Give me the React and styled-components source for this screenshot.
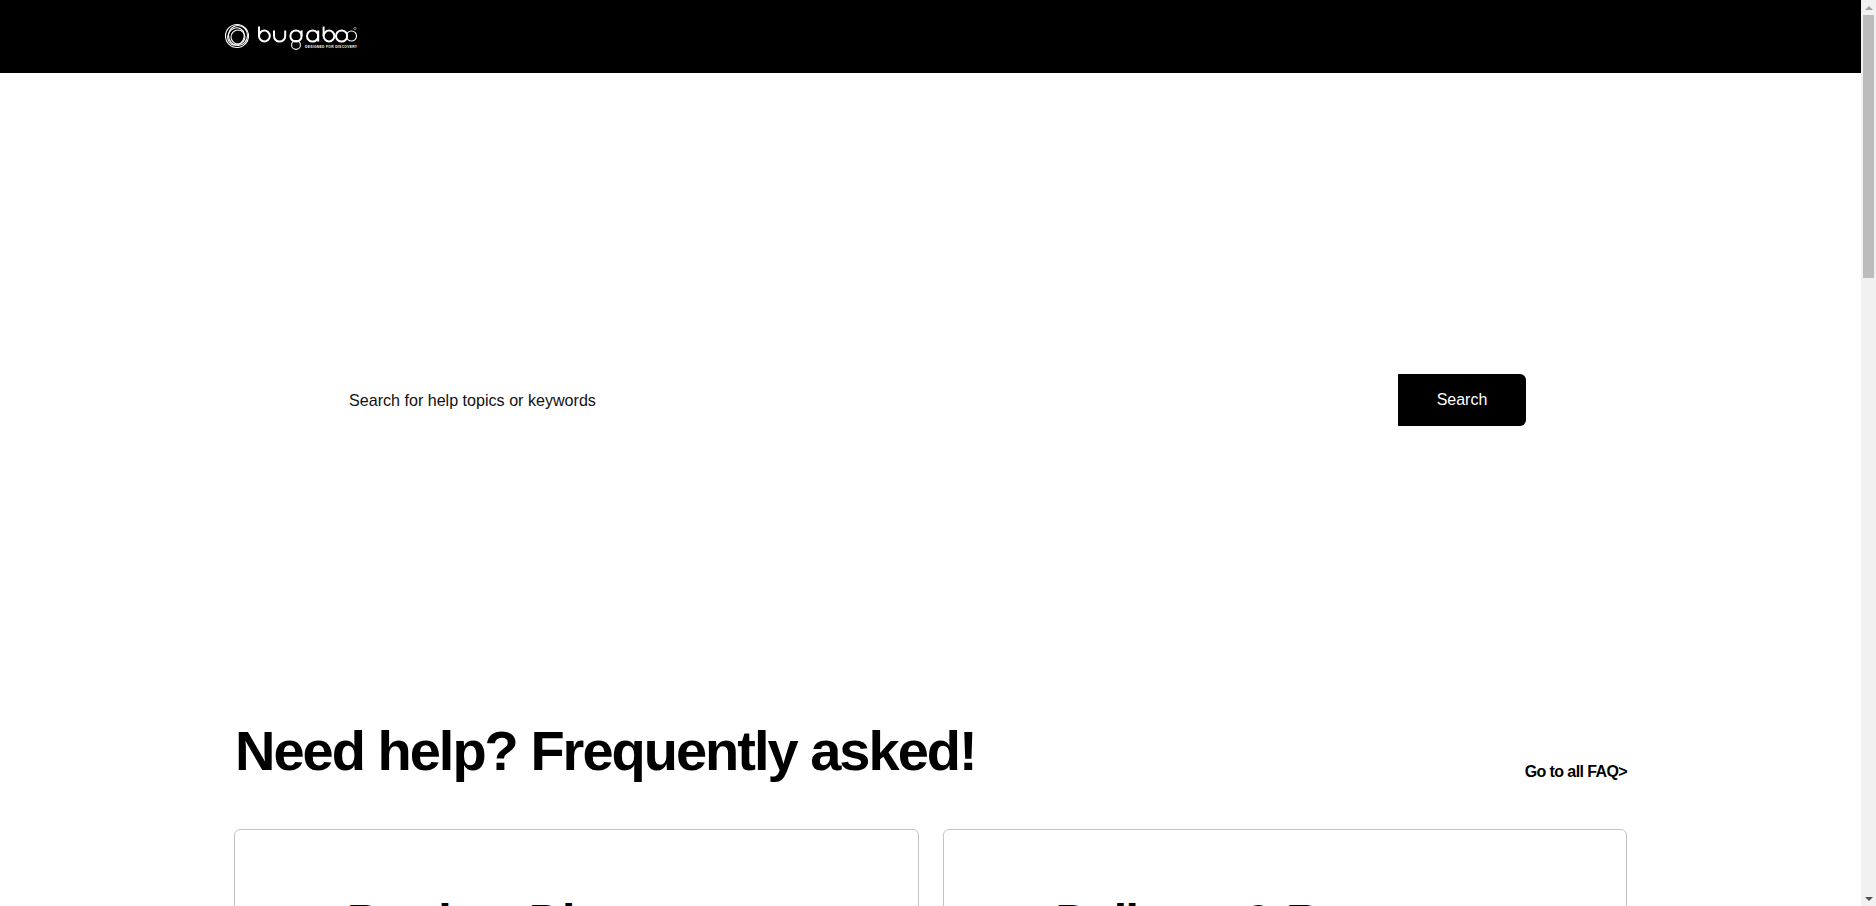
import React from 'react'
import styled, { createGlobalStyle } from 'styled-components'

const GlobalStyle = createGlobalStyle`
  html, body {
    height: 100%;
    overflow: hidden;
  }
  body {
    margin: 0;
    background: #fff;
    color: #000;
    font-family: "Liberation Sans", Arial, sans-serif;
  }
`

const Shell = styled.div`
  height: 100vh;
  display: flex;
`

const Page = styled.main`
  flex: 1;
  min-width: 0;
  overflow: hidden;
`

/* classic browser scrollbar down the right edge */
const ScrollRail = styled.div`
  width: 15px;
  flex: none;
  background: #f1f1f1;
  display: flex;
  flex-direction: column;
  align-items: center;
`

const ArrowBox = styled.div`
  height: 15px;
  flex: none;
  display: flex;
  align-items: center;
  justify-content: center;
`

const Arrow = styled.span`
  width: 0;
  height: 0;
  border-left: 4px solid transparent;
  border-right: 4px solid transparent;
  ${(p) => (p.$down ? 'border-top: 4px solid #505050;' : 'border-bottom: 4px solid #a3a3a3;')}
`

const ScrollTrack = styled.div`
  flex: 1;
  align-self: stretch;
  padding: 0 2px;
`

const ScrollThumb = styled.div`
  height: 263px;
  background: #bcbcbc;
`

const Header = styled.header`
  height: 73px;
  background: #000;
  display: flex;
  align-items: center;
  padding: 0 0 2px 224px;
  box-sizing: border-box;
`

const Hero = styled.section`
  height: 654px;
  display: flex;
  align-items: center;
  justify-content: center;
`

const SearchForm = styled.form`
  width: 1191px;
  height: 52px;
  display: flex;
`

const SearchInput = styled.input`
  flex: 1;
  min-width: 0;
  border: none;
  outline: none;
  padding: 0 14px;
  font-family: inherit;
  font-size: 16.1px;
  color: #000;

  &::placeholder {
    color: #111;
    opacity: 1;
  }
`

const SearchButton = styled.button`
  width: 128px;
  border: none;
  border-radius: 0 6px 6px 0;
  background: #000;
  color: #fff;
  font-family: inherit;
  font-size: 16px;
  cursor: pointer;
`

const Faq = styled.section`
  width: 1393px;
  margin: 0 auto;
`

const FaqHead = styled.div`
  height: 102px;
  display: flex;
  justify-content: space-between;
  align-items: flex-start;
`

const FaqTitle = styled.h1`
  margin: -4px 0 0;
  padding-left: 1px;
  font-size: 56px;
  line-height: 1;
  font-weight: 700;
  letter-spacing: -2px;
`

const AllLink = styled.a`
  margin-top: 35px;
  font-size: 16px;
  line-height: 20px;
  font-weight: 700;
  letter-spacing: -0.6px;
  color: #000;
  text-decoration: none;
  cursor: pointer;
`

const CardGrid = styled.div`
  display: grid;
  grid-template-columns: 1fr 1fr;
  gap: 24px;
`

const Card = styled.article`
  border: 1px solid #c4c4c4;
  border-radius: 6px;
  padding: 68px 112px;
  min-height: 520px;
`

const CardTitle = styled.h2`
  margin: 0;
  font-size: 48px;
  line-height: 1;
  font-weight: 700;
  letter-spacing: -1.6px;
`

const Logo = () => (
  <svg width="140" height="36" viewBox="0 0 140 36" fill="none" stroke="#fff" strokeWidth="2">
    <g strokeWidth="1.1">
      <circle cx="13" cy="18" r="11.5" />
      <ellipse cx="14" cy="17.5" rx="9.5" ry="10" />
      <ellipse cx="12" cy="18.5" rx="8" ry="9" transform="rotate(30 12 18.5)" />
      <circle cx="14" cy="19" r="7" />
    </g>
    <path d="M35 8.5V18" />
    <circle cx="40.4" cy="18" r="5.4" />
    <path d="M50 12.5V18a5.6 5.6 0 0 0 11.2 0v-5.5" />
    <circle cx="72" cy="18" r="5.6" />
    <path d="M77.6 12.5V18" />
    <circle cx="72" cy="27" r="4.4" strokeWidth="1.1" />
    <circle cx="88.6" cy="18" r="5.6" />
    <path d="M94.2 12.5V23.6" />
    <path d="M99.6 8.5V18" />
    <circle cx="105" cy="18" r="5.4" />
    <circle cx="117.6" cy="18" r="5.6" />
    <circle cx="127.5" cy="18" r="5" strokeWidth="1.1" />
    <circle cx="131" cy="10.5" r="1.2" strokeWidth="0.5" />
    <text x="81" y="30" fill="#fff" stroke="none" fontSize="3.3" fontWeight="700" letterSpacing="0.32" fontFamily="Liberation Sans, sans-serif">
      DESIGNED FOR DISCOVERY
    </text>
  </svg>
)

const App = () => {
  return (
    <Shell>
      <GlobalStyle />
      <Page>
        <Header>
          <Logo />
        </Header>
        <Hero>
          <SearchForm onSubmit={(e) => e.preventDefault()}>
            <SearchInput placeholder="Search for help topics or keywords" />
            <SearchButton>Search</SearchButton>
          </SearchForm>
        </Hero>
        <Faq>
          <FaqHead>
            <FaqTitle>Need help? Frequently asked!</FaqTitle>
            <AllLink>Go to all FAQ&gt;</AllLink>
          </FaqHead>
          <CardGrid>
            <Card>
              <CardTitle>Product Discovery</CardTitle>
            </Card>
            <Card>
              <CardTitle>Delivery &amp; Returns</CardTitle>
            </Card>
          </CardGrid>
        </Faq>
      </Page>
      <ScrollRail>
        <ArrowBox>
          <Arrow />
        </ArrowBox>
        <ScrollTrack>
          <ScrollThumb />
        </ScrollTrack>
        <ArrowBox>
          <Arrow $down />
        </ArrowBox>
      </ScrollRail>
    </Shell>
  )
}

export default App
